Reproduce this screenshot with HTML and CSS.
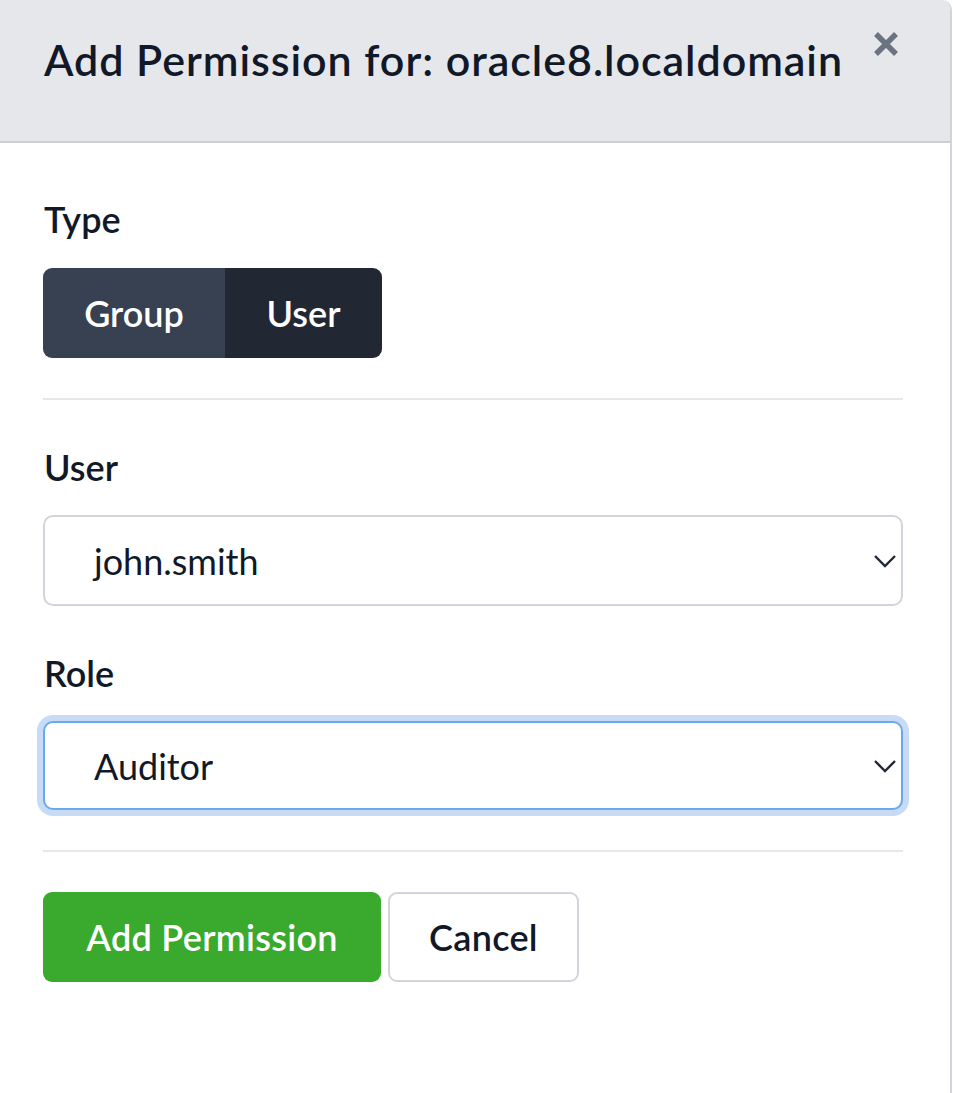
FILE: index.html
```html
<!DOCTYPE html>
<html lang="en">
<head>
<meta charset="utf-8">
<title>Add Permission</title>
<link rel="stylesheet" href="styles.css">
</head>
<body>
<div class="panel">
  <div class="panel-header">
    <h1 class="panel-title">Add Permission for: oracle8.localdomain</h1>
    <button class="close-btn" aria-label="Close">
      <svg width="26" height="26" viewBox="0 0 26 26"><path d="M3 3 L23 23 M23 3 L3 23" stroke="#6b7280" stroke-width="5.5" stroke-linecap="butt" fill="none"/></svg>
    </button>
  </div>
  <div class="panel-body">
    <div class="field">
      <div class="label label-type">Type</div>
      <div class="btn-group">
        <button class="seg seg-off">Group</button>
        <button class="seg seg-on">User</button>
      </div>
    </div>
    <hr class="divider">
    <div class="field">
      <div class="label label-user">User</div>
      <div class="select">
        <span class="select-value">john.smith</span>
        <svg class="chevron" width="24" height="14" viewBox="0 0 24 14"><path d="M2 2 L12 12 L22 2" stroke="#1f2937" stroke-width="2.4" fill="none"/></svg>
      </div>
    </div>
    <div class="field field-role">
      <div class="label label-role">Role</div>
      <div class="select select-focus">
        <span class="select-value">Auditor</span>
        <svg class="chevron" width="24" height="14" viewBox="0 0 24 14"><path d="M2 2 L12 12 L22 2" stroke="#1f2937" stroke-width="2.4" fill="none"/></svg>
      </div>
    </div>
    <hr class="divider divider-bottom">
    <div class="actions">
      <button class="btn btn-primary">Add Permission</button>
      <button class="btn btn-secondary">Cancel</button>
    </div>
  </div>
</div>
</body>
</html>
```
FILE: styles.css
```css
* { box-sizing: border-box; }
html, body { margin: 0; padding: 0; background: #ffffff; }
body {
  font-family: Lato, "Liberation Sans", sans-serif;
  color: #111827;
  width: 953px;
  height: 1093px;
  overflow: hidden;
}
.panel {
  width: 952px;
  height: 1093px;
  border-right: 2px solid #d1d5db;
  border-top-right-radius: 10px;
  background: #ffffff;
  overflow: hidden;
}
.panel-header {
  height: 143px;
  background: #e5e7eb;
  border-bottom: 2px solid #cbced3;
  display: flex;
  justify-content: space-between;
  align-items: flex-start;
  padding: 36px 51px 0 44px;
}
.panel-title {
  margin: 0;
  font-size: 43px;
  line-height: 48px;
  font-weight: 600;
  color: #111827;
  letter-spacing: 0.95px;
}
.close-btn {
  border: 0;
  background: transparent;
  padding: 0;
  margin-top: -5px;
  width: 26px;
  height: 26px;
  display: block;
}
.close-btn svg { display: block; }
.panel-body {
  padding: 56px 47px 0 43px;
}
.label {
  font-size: 36px;
  line-height: 40px;
  font-weight: 600;
  color: #111827;
  margin: 0 0 28px 1px;
}
.label-type { margin-bottom: 29px; }
.btn-group {
  display: inline-flex;
  border-radius: 9px;
  overflow: hidden;
  height: 90px;
}
.seg {
  border: 0;
  font-family: inherit;
  font-size: 36px;
  font-weight: 600;
  color: #ffffff;
  padding: 0;
  height: 90px;
}
.seg-off { background: #374151; width: 182px; }
.seg-on { background: #222833; width: 157px; }
.divider {
  border: 0;
  height: 2px;
  background: #e5e7eb;
  margin: 40px 0 47px 0;
}
.divider-bottom { margin: 40px 0 40px 0; }
.field-role { margin-top: 47px; }
.select {
  height: 91px;
  border: 2px solid #d1d5db;
  border-radius: 10px;
  display: flex;
  align-items: center;
  justify-content: space-between;
  padding: 0 4px 0 49px;
  background: #ffffff;
}
.select-focus {
  height: 89px;
  border-color: #6aa8f2;
  box-shadow: 0 0 0 6px #c7dbf5;
}
.select-value {
  font-size: 36px;
  line-height: 40px;
  font-weight: 400;
  color: #111827;
}
.chevron { display: block; }
.actions {
  display: flex;
  gap: 7px;
}
.btn {
  height: 90px;
  border-radius: 9px;
  font-family: inherit;
  font-size: 36px;
  font-weight: 600;
  letter-spacing: 0.3px;
  padding: 0;
}
.btn-primary {
  background: #3aaa2e;
  color: #ffffff;
  border: 0;
  width: 338px;
}
.btn-secondary {
  background: #ffffff;
  color: #111827;
  border: 2px solid #d1d5db;
  width: 191px;
}
```
